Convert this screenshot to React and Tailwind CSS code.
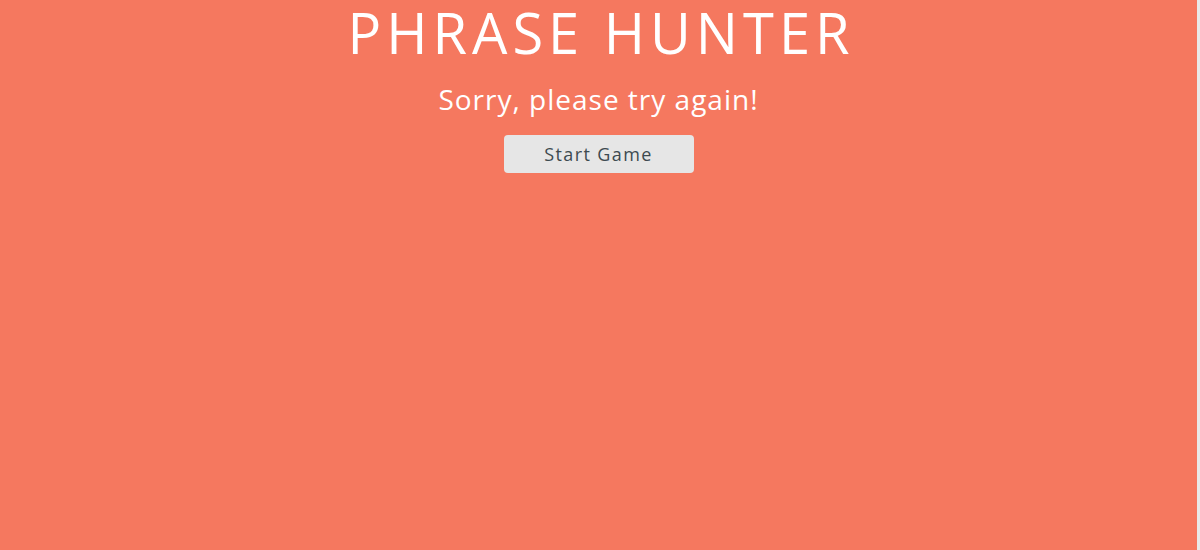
export default function App() {
  return (
    <div className="flex h-[550px] w-full bg-[#e9e9e9]" style={{ fontFamily: '"Open Sans", "Liberation Sans", sans-serif' }}>
      <main className="flex flex-1 flex-col items-center bg-[#f5785f] text-white">
        <h1 className="pl-[5px] text-[56px] font-normal leading-[64px] tracking-[5px]">PHRASE HUNTER</h1>
        <h2 className="mt-[17px] text-[28px] font-medium leading-[36px] tracking-[1px]">Sorry, please try again!</h2>
        <button className="mt-[18px] h-[38px] w-[190px] rounded-[4px] bg-[#e6e6e6] text-[18px] tracking-[1.4px] text-[#3d4a50]">
          Start Game
        </button>
      </main>
      <div className="w-[3px] bg-[#e9e9e9]" />
    </div>
  );
}
